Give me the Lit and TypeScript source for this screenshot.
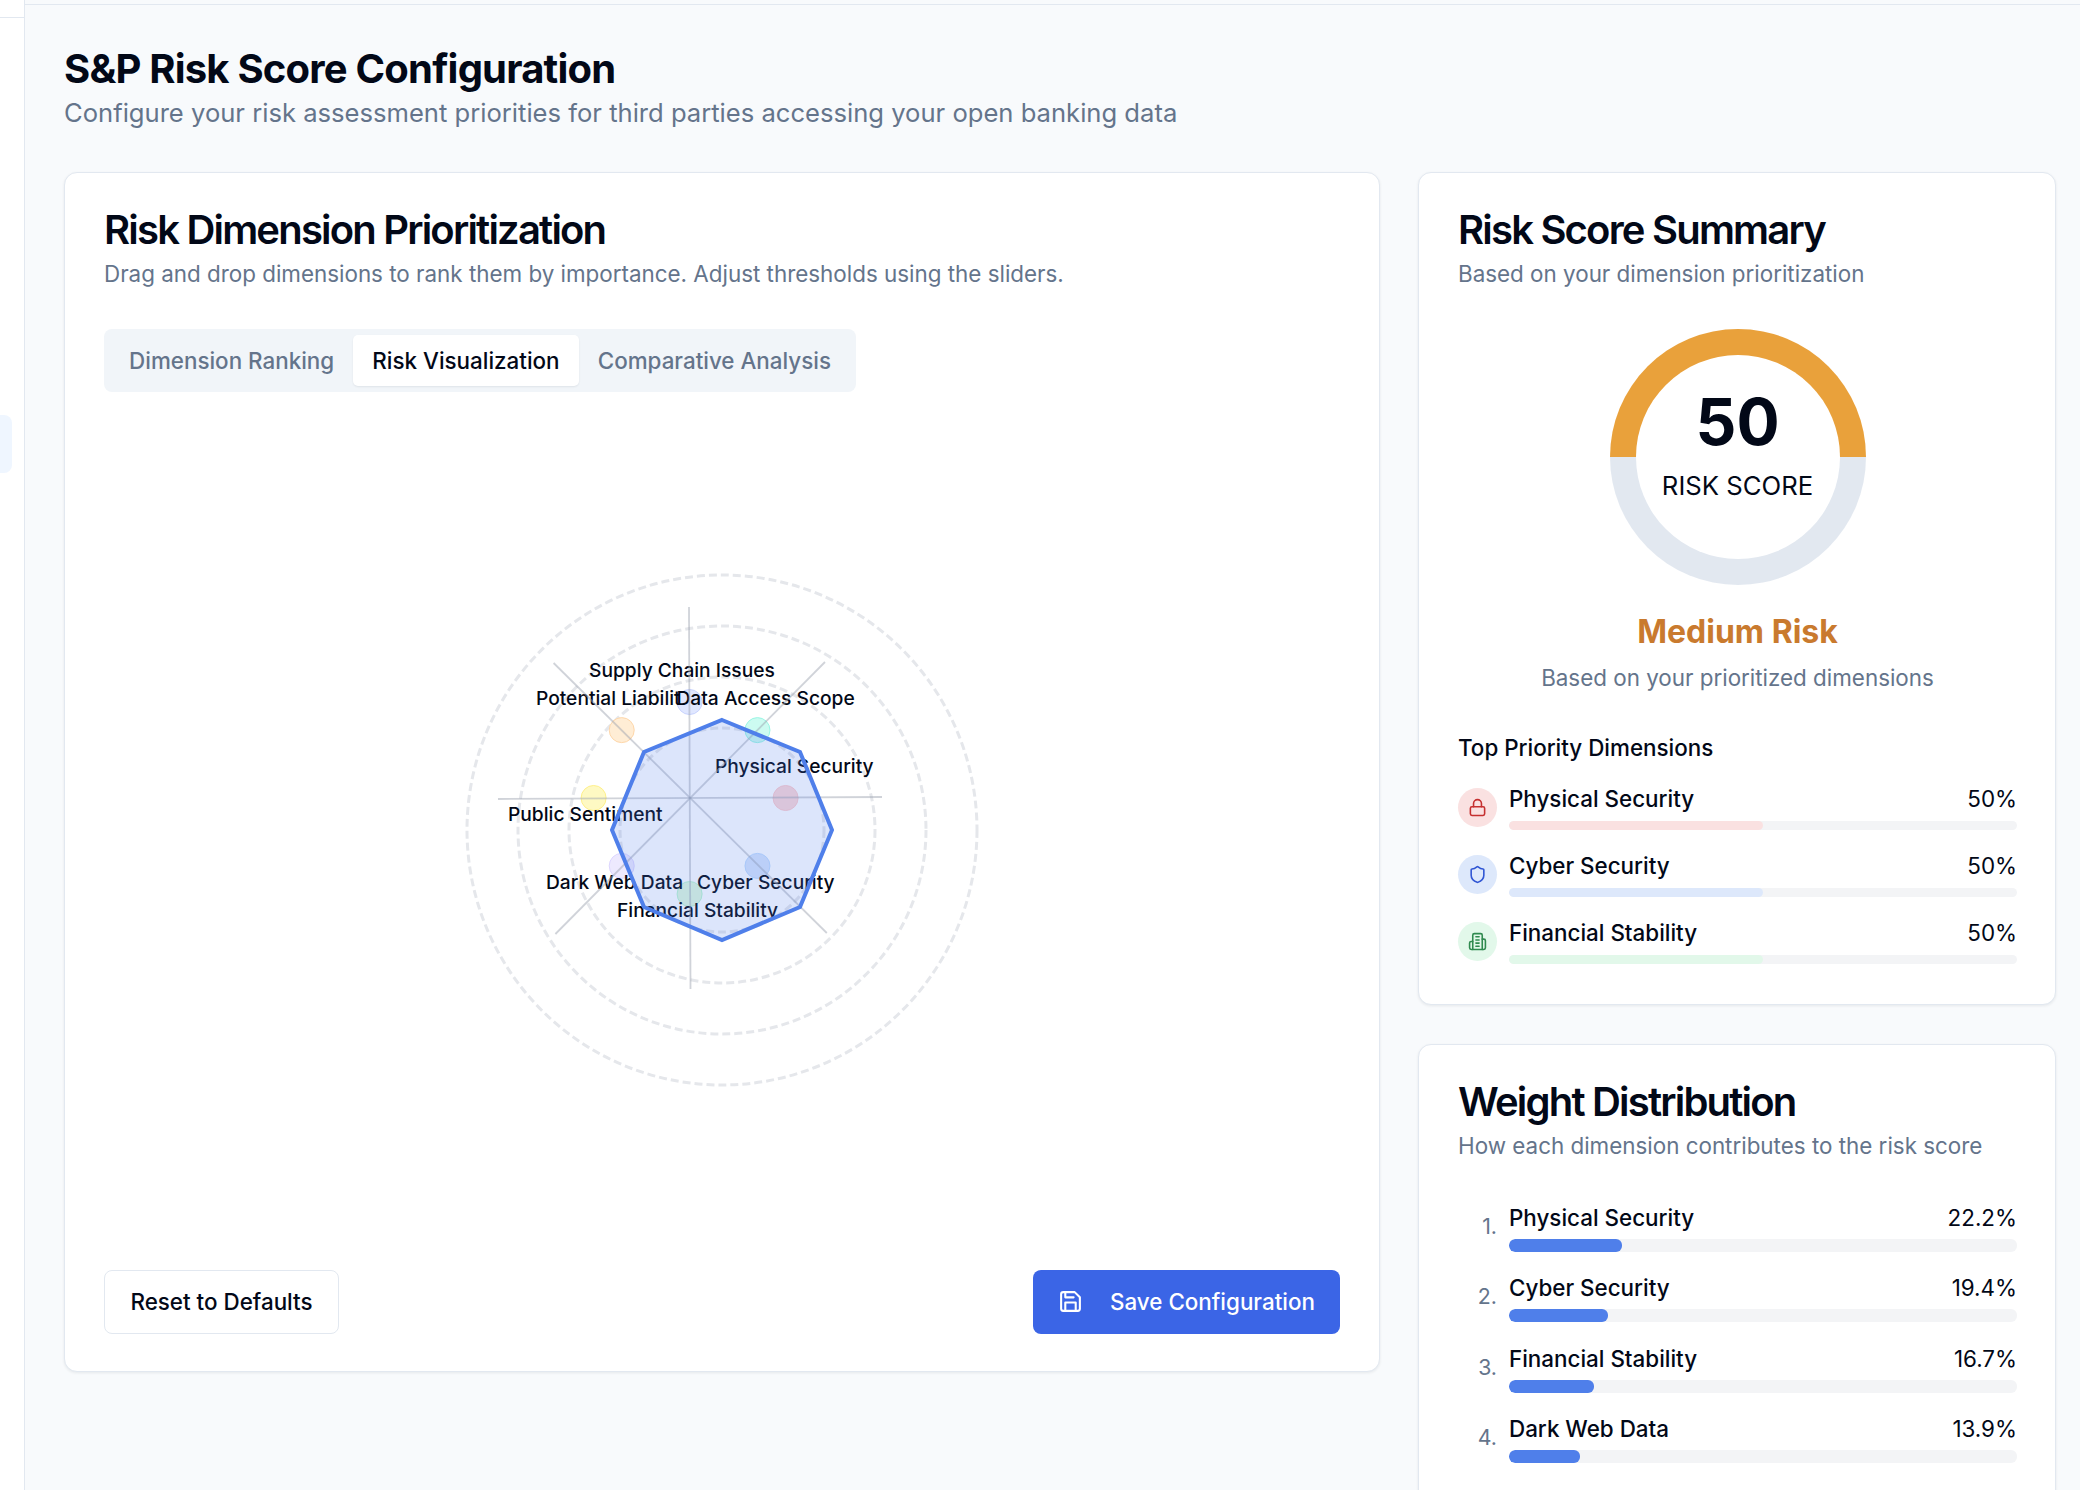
import { LitElement, html, css, svg } from "lit";
import { customElement } from "lit/decorators.js";

const CX = 689.6 - 440;
const CY = 799 - 550;

// radar canvas starts at page (440,550)
const dots = [
  { a: -90, fill: "#e0e7ff", stroke: "#c7d2fe" },
  { a: -45, fill: "#ccfbf1", stroke: "#99f6e4" },
  { a: 0, fill: "#fdd8d8", stroke: "#fecaca" },
  { a: 45, fill: "#d6e4fc", stroke: "#bfdbfe" },
  { a: 90, fill: "#e0f9de", stroke: "#bbf7d0" },
  { a: 135, fill: "#ede9fe", stroke: "#ddd6fe" },
  { a: 180, fill: "#fef9c3", stroke: "#fef08a" },
  { a: 225, fill: "#ffedd5", stroke: "#fed7aa" },
];

const labels = [
  { t: "Supply Chain Issues", x: 149, y: 121 },
  { t: "Potential Liability", x: 96, y: 149, clip: true },
  { t: "Data Access Scope", x: 236.5, y: 149 },
  { t: "Physical Security", x: 275, y: 217 },
  { t: "Public Sentiment", x: 68, y: 265 },
  { t: "Dark Web Data", x: 106, y: 333 },
  { t: "Cyber Security", x: 257, y: 333 },
  { t: "Financial Stability", x: 177, y: 361 },
];

const spokes = [
  [58, 250, 442, 248],
  [249, 58, 250.5, 440],
  [113.6, 114, 386.8, 384],
  [385, 113, 115.4, 385],
];

const polygon = "282,171 360,203 392,281 360,358 282,391 204,358 172,281 204,203";

const topDims = [
  { name: "Physical Security", tone: "red", icon: "lock" },
  { name: "Cyber Security", tone: "blue", icon: "shield" },
  { name: "Financial Stability", tone: "green", icon: "building" },
];

const weights = [
  { name: "Physical Security", pct: 22.2 },
  { name: "Cyber Security", pct: 19.4 },
  { name: "Financial Stability", pct: 16.7 },
  { name: "Dark Web Data", pct: 13.9 },
  { name: "Public Sentiment", pct: 11.1 },
];

function icon(name: string) {
  if (name === "lock")
    return html`<svg viewBox="0 0 24 24"><rect x="3" y="11" width="18" height="11" rx="2"></rect><path d="M7 11V7a5 5 0 0 1 10 0v4"></path></svg>`;
  if (name === "shield")
    return html`<svg viewBox="0 0 24 24"><path d="M20 13c0 5-3.5 7.5-7.66 8.95a1 1 0 0 1-.67-.01C7.5 20.5 4 18 4 13V6a1 1 0 0 1 1-1c2 0 4.5-1.2 6.24-2.72a1.17 1.17 0 0 1 1.52 0C14.51 3.81 17 5 19 5a1 1 0 0 1 1 1z"></path></svg>`;
  return html`<svg viewBox="0 0 24 24"><path d="M6 22V4a2 2 0 0 1 2-2h8a2 2 0 0 1 2 2v18z"></path><path d="M6 12H4a2 2 0 0 0-2 2v6a2 2 0 0 0 2 2h2"></path><path d="M18 9h2a2 2 0 0 1 2 2v9a2 2 0 0 1-2 2h-2"></path><path d="M10 6h4"></path><path d="M10 10h4"></path><path d="M10 14h4"></path><path d="M10 18h4"></path></svg>`;
}

@customElement("app-root")
export class AppRoot extends LitElement {
  renderRadar() {
    return html`
      <svg class="radar" viewBox="0 0 560 550" width="560" height="550">
        <defs>
          <clipPath id="label-clip"><rect x="0" y="120" width="240" height="60"></rect></clipPath>
        </defs>
        ${[255, 204, 153, 102].map(
          (r) => svg`<circle class="ring" cx="282" cy="281" r=${r}></circle>`
        )}
        ${dots.map((d) => {
          const rad = (d.a * Math.PI) / 180;
          return svg`<circle cx=${CX + 96 * Math.cos(rad)} cy=${CY + 96 * Math.sin(rad)} r="12.5"
            fill=${d.fill} stroke=${d.stroke} stroke-width="1"></circle>`;
        })}
        ${labels.map((l) =>
          l.clip
            ? svg`<text class="label" x=${l.x} y=${l.y} clip-path="url(#label-clip)">${l.t}</text>`
            : svg`<text class="label" x=${l.x} y=${l.y}>${l.t}</text>`
        )}
        ${spokes.map(
          (s) => svg`<line class="spoke" x1=${s[0]} y1=${s[1]} x2=${s[2]} y2=${s[3]}></line>`
        )}
        <polygon class="shape" points=${polygon}></polygon>
      </svg>
    `;
  }

  render() {
    return html`
      <div class="shell">
        <aside class="sidebar">
          <div class="side-head"></div>
          <div class="side-item"></div>
        </aside>
        <main class="main">
          <header class="page-head">
            <h1>S&amp;P Risk Score Configuration</h1>
            <p>Configure your risk assessment priorities for third parties accessing your open banking data</p>
          </header>
          <div class="columns">
            <section class="card left">
              <h2>Risk Dimension Prioritization</h2>
              <p class="sub">Drag and drop dimensions to rank them by importance. Adjust thresholds using the sliders.</p>
              <div class="tabs">
                <span class="tab">Dimension Ranking</span>
                <span class="tab active">Risk Visualization</span>
                <span class="tab">Comparative Analysis</span>
              </div>
              <div class="radar-wrap">${this.renderRadar()}</div>
              <div class="actions">
                <button class="btn ghost">Reset to Defaults</button>
                <button class="btn primary">
                  <svg viewBox="0 0 24 24"><path d="M19 21H5a2 2 0 0 1-2-2V5a2 2 0 0 1 2-2h11l5 5v11a2 2 0 0 1-2 2z"></path><polyline points="17 21 17 13 7 13 7 21"></polyline><polyline points="7 3 7 8 15 8"></polyline></svg>
                  Save Configuration
                </button>
              </div>
            </section>
            <div class="right">
              <section class="card summary">
                <h2>Risk Score Summary</h2>
                <p class="sub">Based on your dimension prioritization</p>
                <div class="gauge">
                  <div class="gauge-inner">
                    <div class="score">50</div>
                    <div class="score-label">RISK SCORE</div>
                  </div>
                </div>
                <div class="level">Medium Risk</div>
                <div class="level-sub">Based on your prioritized dimensions</div>
                <div class="top-title">Top Priority Dimensions</div>
                <div class="top-list">
                  ${topDims.map(
                    (d) => html`
                      <div class="top-row ${d.tone}">
                        <span class="badge">${icon(d.icon)}</span>
                        <div class="top-body">
                          <div class="line"><span>${d.name}</span><span>50%</span></div>
                          <div class="track thin"><div class="fill" style="width: 50%"></div></div>
                        </div>
                      </div>
                    `
                  )}
                </div>
              </section>
              <section class="card weights">
                <h2>Weight Distribution</h2>
                <p class="sub">How each dimension contributes to the risk score</p>
                <div class="weight-list">
                  ${weights.map(
                    (w, i) => html`
                      <div class="weight-row">
                        <span class="num">${i + 1}.</span>
                        <div class="top-body">
                          <div class="line"><span>${w.name}</span><span>${w.pct}%</span></div>
                          <div class="track"><div class="fill" style="width: ${w.pct}%"></div></div>
                        </div>
                      </div>
                    `
                  )}
                </div>
              </section>
            </div>
          </div>
        </main>
      </div>
    `;
  }

  static styles = css`
    :host {
      display: block;
      height: 1490px;
      overflow: hidden;
      font-family: Inter, "Liberation Sans", sans-serif;
      color: #020817;
      background: #f8fafc;
    }
    * {
      box-sizing: border-box;
    }
    h1,
    h2,
    p {
      margin: 0;
    }
    .shell {
      display: flex;
      height: 1490px;
    }
    .sidebar {
      width: 25px;
      flex: none;
      background: #fff;
      border-right: 1px solid #e2e8f0;
      overflow: hidden;
    }
    .side-head {
      height: 18px;
      border-bottom: 1px solid #e2e8f0;
    }
    .side-item {
      width: 12px;
      height: 58px;
      margin-top: 397px;
      background: #eff6ff;
      border-radius: 0 8px 8px 0;
    }
    .main {
      flex: 1;
      min-width: 0;
      border-top: 1px solid #e2e8f0;
      margin-top: 4px;
      padding: 0 24px 0 39px;
    }
    .page-head {
      padding-top: 40px;
      height: 167px;
    }
    h1 {
      font-size: 40px;
      line-height: 48px;
      font-weight: 700;
      letter-spacing: -0.8px;
    }
    .page-head p {
      font-size: 25.6px;
      line-height: 36px;
      color: #64748b;
      margin-top: 2px;
    }
    .columns {
      display: grid;
      grid-template-columns: 1316px 638px;
      gap: 38px;
      align-items: start;
    }
    .card {
      background: #fff;
      border: 1px solid #e2e8f0;
      border-radius: 13px;
      padding: 37px 39px 39px;
      box-shadow: 0 1px 3px rgba(15, 23, 42, 0.08);
    }
    .left {
      height: 1200px;
    }
    h2 {
      font-size: 40px;
      line-height: 40px;
      font-weight: 600;
      letter-spacing: -1.8px;
    }
    .sub {
      font-size: 22.4px;
      line-height: 32px;
      color: #64748b;
      margin-top: 8px;
    }
    .tabs {
      display: inline-flex;
      margin-top: 39px;
      padding: 6px;
      background: #f1f5f9;
      border-radius: 8px;
    }
    .tab {
      padding: 0 19.1px;
      height: 51px;
      line-height: 51px;
      font-size: 22.4px;
      font-weight: 500;
      color: #64748b;
      border-radius: 5px;
    }
    .tab.active {
      background: #fff;
      color: #020817;
      box-shadow: 0 1px 2px rgba(15, 23, 42, 0.08);
    }
    .radar-wrap {
      height: 550px;
      margin: 157px 0 0 -1px;
      position: relative;
      left: 337px;
    }
    .radar {
      display: block;
      overflow: visible;
    }
    .ring {
      fill: none;
      stroke: #e5e7eb;
      stroke-width: 3;
      stroke-dasharray: 8 4;
    }
    .spoke {
      stroke: #9ca3af;
      stroke-opacity: 0.48;
      stroke-width: 1.8;
    }
    .shape {
      fill: rgba(79, 127, 234, 0.2);
      stroke: #4f7fea;
      stroke-width: 4;
    }
    .label {
      font-size: 19.2px;
      font-weight: 500;
      fill: #020817;
      dominant-baseline: central;
    }
    .actions {
      display: flex;
      justify-content: space-between;
      margin-top: 171px;
    }
    .btn {
      display: inline-flex;
      align-items: center;
      height: 64px;
      padding-bottom: 2px;
      font-family: inherit;
      font-size: 22.4px;
      font-weight: 500;
      border-radius: 8px;
    }
    .ghost {
      width: 235px;
      justify-content: center;
      background: #fff;
      color: #020817;
      border: 1px solid #e2e8f0;
    }
    .primary {
      width: 307px;
      padding-left: 25px;
      padding-right: 25px;
      gap: 27px;
      background: #3b65e6;
      color: #fff;
      border: 0;
    }
    .primary svg {
      width: 25px;
      height: 25px;
      fill: none;
      stroke: #fff;
      stroke-width: 2;
      stroke-linecap: round;
      stroke-linejoin: round;
    }
    .right {
      display: flex;
      flex-direction: column;
      gap: 39px;
    }
    .right .card {
      padding-right: 38px;
    }
    .summary {
      height: 833px;
    }
    .gauge {
      width: 256px;
      height: 256px;
      margin: 39px auto 0;
      padding: 26px;
      border-radius: 50%;
      background: linear-gradient(#e9a13b 50%, #e2e8f0 50%);
    }
    .gauge-inner {
      width: 100%;
      height: 100%;
      border-radius: 50%;
      background: #fff;
      display: flex;
      flex-direction: column;
      align-items: center;
      padding-top: 35px;
    }
    .score {
      font-size: 64px;
      line-height: 64px;
      font-weight: 700;
    }
    .score-label {
      font-size: 25.7px;
      line-height: 32px;
      margin-top: 16px;
    }
    .level {
      text-align: center;
      font-size: 32px;
      line-height: 40px;
      font-weight: 700;
      color: #c97a2e;
      margin-top: 27px;
    }
    .level-sub {
      text-align: center;
      font-size: 22.4px;
      line-height: 32px;
      color: #64748b;
      margin-top: 10px;
    }
    .top-title {
      font-size: 22.4px;
      line-height: 32px;
      font-weight: 500;
      margin-top: 38px;
    }
    .top-list {
      display: flex;
      flex-direction: column;
      gap: 20px;
      margin-top: 19px;
    }
    .top-row {
      display: flex;
      gap: 12px;
    }
    .badge {
      width: 39px;
      height: 39px;
      border-radius: 50%;
      flex: none;
      display: flex;
      align-items: center;
      justify-content: center;
      margin-top: 4.5px;
    }
    .badge svg {
      width: 19px;
      height: 19px;
      fill: none;
      stroke: currentColor;
      stroke-width: 2;
      stroke-linecap: round;
      stroke-linejoin: round;
    }
    .red .badge {
      background: #fae1e1;
      color: #c53030;
    }
    .blue .badge {
      background: #dde8fb;
      color: #2f55d4;
    }
    .green .badge {
      background: #e2f8ea;
      color: #2f8a4f;
    }
    .red .fill {
      background: #fae1e1;
    }
    .blue .fill {
      background: #dde8fb;
    }
    .green .fill {
      background: #e2f8ea;
    }
    .top-body {
      flex: 1;
      min-width: 0;
    }
    .line {
      display: flex;
      justify-content: space-between;
      font-size: 22.4px;
      line-height: 32px;
      font-weight: 500;
    }
    .line span:last-child {
      font-weight: 400;
    }
    .track {
      height: 13px;
      margin-top: 5px;
      border-radius: 6px;
      background: #f3f4f6;
      overflow: hidden;
    }
    .track.thin {
      height: 9px;
      margin-top: 6px;
      border-radius: 5px;
    }
    .fill {
      height: 100%;
      background: #4f7fea;
      border-radius: 6px;
    }
    .weight-list {
      display: flex;
      flex-direction: column;
      gap: 20.4px;
      margin-top: 40px;
    }
    .weight-row {
      display: flex;
      gap: 12px;
    }
    .num {
      width: 39px;
      flex: none;
      text-align: right;
      font-size: 21.3px;
      color: #64748b;
      padding-top: 11px;
    }
  `;
}
